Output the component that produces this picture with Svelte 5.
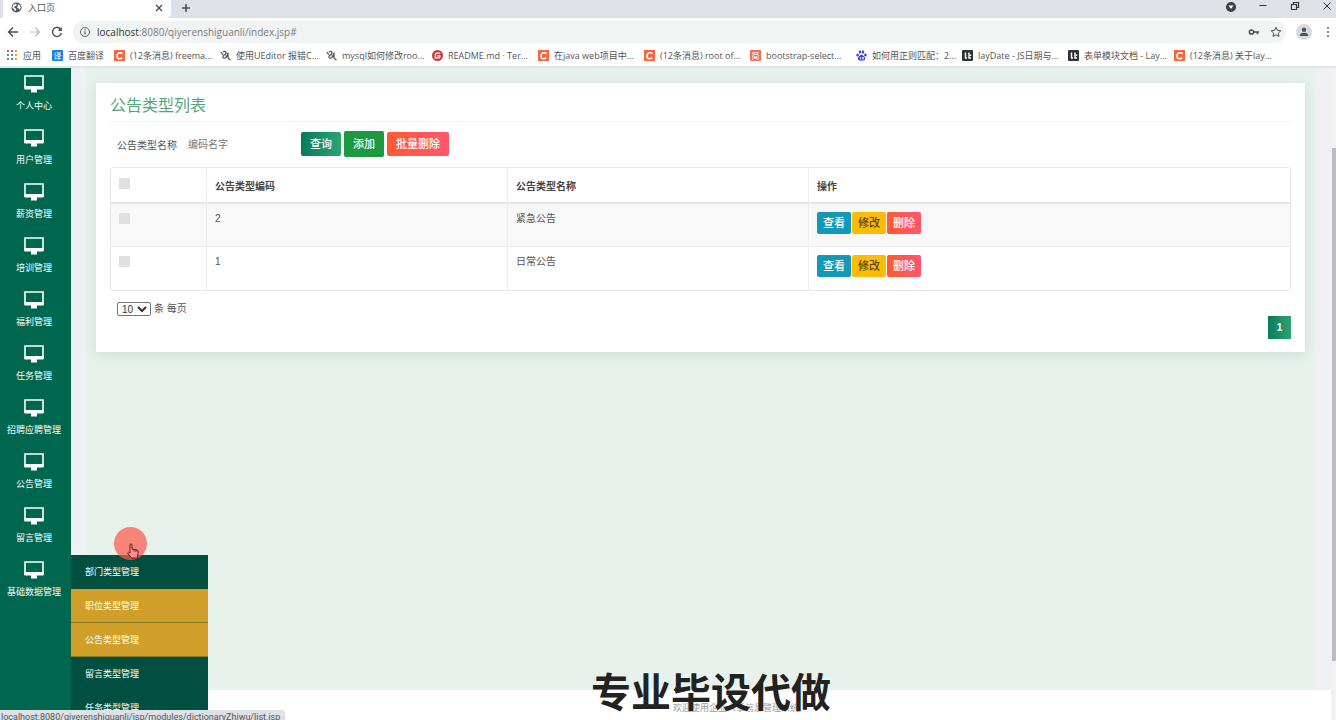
<script lang="ts">
	interface Bookmark {
		icon: 'csdn' | 'ueditor' | 'gitee' | 'jian' | 'baidu' | 'lay';
		title: string;
	}

	const bookmarks: Bookmark[] = [
		{ icon: 'csdn', title: '(12条消息) freema...' },
		{ icon: 'ueditor', title: '使用UEditor 报错C...' },
		{ icon: 'ueditor', title: 'mysql如何修改roo...' },
		{ icon: 'gitee', title: 'README.md · Ter...' },
		{ icon: 'csdn', title: '在java web项目中...' },
		{ icon: 'csdn', title: '(12条消息) root of...' },
		{ icon: 'jian', title: 'bootstrap-select...' },
		{ icon: 'baidu', title: '如何用正则匹配：2...' },
		{ icon: 'lay', title: 'layDate - JS日期与...' },
		{ icon: 'lay', title: '表单模块文档 - Lay...' },
		{ icon: 'csdn', title: '(12条消息) 关于lay...' }
	];

	const menu = [
		'个人中心',
		'用户管理',
		'薪资管理',
		'培训管理',
		'福利管理',
		'任务管理',
		'招聘应聘管理',
		'公告管理',
		'留言管理',
		'基础数据管理'
	];

	const submenu = [
		{ title: '部门类型管理', active: false },
		{ title: '职位类型管理', active: true },
		{ title: '公告类型管理', active: true },
		{ title: '留言类型管理', active: false },
		{ title: '任务类型管理', active: false }
	];

	const rows = [
		{ code: 2, name: '紧急公告' },
		{ code: 1, name: '日常公告' }
	];

	let keyword = $state('');
	let pageSize = $state('10');
</script>

<div class="window">
	<header>
		<div class="tabs">
			<div class="tab">
				<svg class="globe" viewBox="0 0 12 12">
					<circle cx="6" cy="6" r="5.5" fill="#50555a" />
					<path d="M2 3.5l2.5-1.6 2 .8-1 1.6-2 .6.3 1.6 2 .6-.4 2.2-1.2.4L2.6 7 1.4 6zM8 2.5l2 1.6.6 2.2L9 8.6l-.9-1.7-1.5-.7.6-1.7z" fill="#fff" />
				</svg>
				<span>入口页</span>
				<button class="icon-btn close" aria-label="关闭标签页">
					<svg viewBox="0 0 8 8"><path d="M1 1l6 6M7 1L1 7" stroke="#45494d" stroke-width="1.3" /></svg>
				</button>
			</div>
			<button class="icon-btn plus" aria-label="新标签页">
				<svg viewBox="0 0 10 10"><path d="M5 1v8M1 5h8" stroke="#45494d" stroke-width="1.5" /></svg>
			</button>
			<div class="controls">
				<svg viewBox="0 0 12 12"><circle cx="6" cy="7" r="5" fill="#3c4043" /><path d="M3.5 5.5h5L6 9z" fill="#fff" /></svg>
				<svg viewBox="0 0 12 12"><path d="M2.5 5.5h7" stroke="#333" /></svg>
				<svg viewBox="0 0 12 12"><path d="M2.5 4.5h5v5h-5zM4.5 4V2.5h5v5H8" fill="none" stroke="#333" stroke-width="1.2" /></svg>
				<svg viewBox="0 0 12 12"><path d="M2.5 2.5l7 7M9.5 2.5l-7 7" stroke="#333" /></svg>
			</div>
		</div>

		<div class="toolbar">
			<button class="icon-btn" aria-label="后退">
				<svg viewBox="0 0 12 12"><path d="M11 6H1.5M6 1.5L1.5 6 6 10.5" fill="none" stroke="#4a4e52" stroke-width="1.4" /></svg>
			</button>
			<button class="icon-btn" aria-label="前进">
				<svg viewBox="0 0 12 12"><path d="M1 6h9.5M6 1.5L10.5 6 6 10.5" fill="none" stroke="#b9bcc0" stroke-width="1.2" /></svg>
			</button>
			<button class="icon-btn" aria-label="重新加载">
				<svg viewBox="0 0 12 12"><path d="M10 3.8A4.5 4.5 0 1 0 10.4 7" fill="none" stroke="#4a4e52" stroke-width="1.4" /><path d="M10.8 1v4h-4z" fill="#4a4e52" /></svg>
			</button>
			<div class="address">
				<svg viewBox="0 0 12 12"><circle cx="6" cy="6" r="4.5" fill="none" stroke="#5f6368" /><path d="M6 5.3v3.2M6 3.3v1.2" stroke="#5f6368" stroke-width="1.2" /></svg>
				<span class="url"><b>localhost</b>:8080/qiyerenshiguanli/index.jsp#</span>
				<svg viewBox="0 0 12 12"><circle cx="3.5" cy="6" r="2.1" fill="none" stroke="#4a4e52" stroke-width="1.5" /><path d="M5.5 6H11M9.5 6v2.3" stroke="#4a4e52" stroke-width="1.6" /></svg>
				<svg class="star" viewBox="0 0 12 12"><path d="M6 1.3l1.4 3.1 3.4.4-2.5 2.3.7 3.4-3-1.7-3 1.7.7-3.4L1.2 4.8l3.4-.4z" fill="none" stroke="#4a4e52" /></svg>
			</div>
			<svg class="avatar" viewBox="0 0 16 16"><circle cx="8" cy="8" r="8" fill="#d5dbe1" /><circle cx="8" cy="5.8" r="2.2" fill="#4b5560" /><path d="M3.8 12v-1.2Q4.5 8.8 8 8.8t4.2 2V12z" fill="#4b5560" /></svg>
			<svg class="dots" viewBox="0 0 12 12"><circle cx="6" cy="2" r="1" /><circle cx="6" cy="6" r="1" /><circle cx="6" cy="10" r="1" /></svg>
		</div>

		<nav class="bookmarks" aria-label="书签">
			<a class="apps" href="#apps">
				<svg viewBox="0 0 11 11">
					{#each ['#e0524a', '#e0524a', '#e8a13a', '#4c9a5b', '#4a7fd0', '#e8a13a', '#4c9a5b', '#4c9a5b', '#e8a13a'] as color, i}
						<rect x={(i % 3) * 4} y={Math.floor(i / 3) * 4} width="2" height="2" fill={color} />
					{/each}
				</svg>
				应用
			</a>
			<a class="fanyi" href="#fanyi"><span class="mark blue">译</span>百度翻译</a>
			{#each bookmarks as item}
				<a class="bookmark" href="#bookmark">
					{#if item.icon === 'csdn'}
						<svg viewBox="0 0 11 11"><rect width="11" height="11" fill="#f5673f" /><path d="M8.5 3.4Q5 1.800 3.5 4.2T4 8.4q2 .8 4.2-.5" fill="none" stroke="#fff" stroke-width="1.6" /></svg>
					{:else if item.icon === 'ueditor'}
						<svg viewBox="0 0 11 11"><path d="M.8 2.200l2 2.500M2.800 2q3.200-1.500 3.200.800T3.500 5.200M3.500 5.200Q2 8 4.500 8.200T8 2.500V7q.3 2.500 2.500 2.800M5.500 6.200H8" fill="none" stroke="#55585c" stroke-width="1.300" /></svg>
					{:else if item.icon === 'gitee'}
						<svg viewBox="0 0 11 11"><circle cx="5.5" cy="5.5" r="5.5" fill="#c7383c" /><path d="M8.3 3.2H5.2q-2 0-2 2v2.7h3.2Q8 7.900 8 6.300v-.5H5" fill="none" stroke="#fff" stroke-width="1.2" /></svg>
					{:else if item.icon === 'jian'}
						<span class="mark red">简</span>
					{:else if item.icon === 'baidu'}
						<svg viewBox="0 0 11 11" fill="#3b45dc"><ellipse cx="1.6" cy="5" rx="1.3" ry="1.6" /><ellipse cx="4" cy="2" rx="1.2" ry="1.7" /><ellipse cx="7" cy="2" rx="1.2" ry="1.7" /><ellipse cx="9.4" cy="5" rx="1.3" ry="1.6" /><path d="M5.5 4.5Q7 5 9 7.6 9.8 10.6 7 10.5H4Q1.2 10.6 2 7.6 4 5 5.5 4.5z" /><path d="M4.2 7v2h1M6.3 7v2h1.2V7" fill="none" stroke="#fff" stroke-width=".7" /></svg>
					{:else}
						<svg viewBox="0 0 11 11"><rect width="11" height="11" rx="1" fill="#2f3338" /><path d="M3.500 2.500V8H5M7 2.500V8h2M8.500 4.500v1.500" fill="none" stroke="#fff" stroke-width="1.4" /></svg>
					{/if}
					{item.title}
				</a>
			{/each}
		</nav>
	</header>

	<div class="body">
		<aside>
			{#each menu as title, i}
				<div class="menu-item">
					<a href="#menu">
						<svg viewBox="0 0 20 18"><path d="M1 1h18v12H1z" fill="none" stroke="#fff" stroke-width="1.6" /><path d="M.5 11h19v3.500H.5zM7 14h6v3.500H7z" fill="#fff" /></svg>
						{title}
					</a>
					{#if i === menu.length - 1}
						<div class="submenu">
							{#each submenu as sub}
								<a href="#submenu" class:active={sub.active}>{sub.title}</a>
							{/each}
						</div>
					{/if}
				</div>
			{/each}
		</aside>

		<div class="main">
			<main>
				<section class="card">
					<h1>公告类型列表</h1>
					<form class="search" onsubmit={(e) => e.preventDefault()}>
						<label for="keyword">公告类型名称</label>
						<input id="keyword" type="text" placeholder="编码名字" bind:value={keyword} />
						<button class="btn query" type="submit">查询</button>
						<button class="btn add" type="button">添加</button>
						<button class="btn delete" type="button">批量删除</button>
					</form>

					<table>
						<thead>
							<tr>
								<th class="check"><input type="checkbox" aria-label="全选" /></th>
								<th class="field">公告类型编码</th>
								<th class="field">公告类型名称</th>
								<th>操作</th>
							</tr>
						</thead>
						<tbody>
							{#each rows as row}
								<tr>
									<td><input type="checkbox" aria-label={row.name} /></td>
									<td>{row.code}</td>
									<td>{row.name}</td>
									<td>
										<div class="actions">
											<button class="btn view">查看</button>
											<button class="btn edit">修改</button>
											<button class="btn delete">删除</button>
										</div>
									</td>
								</tr>
							{/each}
						</tbody>
					</table>

					<label class="page-size">
						<select bind:value={pageSize}>
							<option>10</option>
							<option>25</option>
							<option>50</option>
						</select>
						条 每页
					</label>
					<div class="pagination"><button>1</button></div>
				</section>
			</main>
			<footer>欢迎使用企业人事信息管理系统</footer>
		</div>

		<div class="scrollbar"><div class="thumb"></div></div>
	</div>

	<div class="pointer">
		<svg viewBox="0 0 14 16"><path d="M4 9V2q0-1.200 1-1.200T6 2v4l5 1q1.500.4 1.300 2L11.500 13v2H5.500L1.500 10q.8-1.500 2.500 0zM8 6.500v2M10 7v2" fill="#ff9088" stroke="#6b1f22" /></svg>
	</div>
	<div class="caption">专业毕设代做</div>
	<div class="status">localhost:8080/qiyerenshiguanli/jsp/modules/dictionaryZhiwu/list.jsp</div>
</div>

<style>
	:global(body) {
		margin: 0;
	}

	.window {
		position: relative;
		display: flex;
		flex-direction: column;
		height: 100vh;
		overflow: hidden;
		background: #fff;
		color: #555;
		font-family: 'Open Sans', 'Noto Sans CJK SC', sans-serif;
		font-size: 10px;
	}

	.window * {
		box-sizing: border-box;
	}

	svg {
		display: block;
		flex-shrink: 0;
		width: 12px;
		height: 12px;
	}

	a {
		color: inherit;
		text-decoration: none;
	}

	button,
	input,
	select {
		font: inherit;
	}

	.icon-btn {
		padding: 0;
		border: 0;
		background: none;
	}

	header {
		flex-shrink: 0;
		border-bottom: 2px solid #e4e7e9;
	}

	.tabs {
		display: flex;
		height: 18px;
		padding-left: 3px;
		background: #dee1e6;
	}

	.tab {
		display: flex;
		align-items: center;
		gap: 6px;
		width: 168px;
		padding: 0 8px 3px;
		border-radius: 0 0 5px 0;
		background: #fff;
		font-size: 9px;
		line-height: 14px;
	}

	.globe {
		width: 11px;
		height: 11px;
	}

	.close {
		margin-left: auto;
	}

	.close svg {
		width: 8px;
		height: 8px;
	}

	.plus {
		margin: 0 10px 3px;
	}

	.plus svg {
		width: 10px;
		height: 10px;
	}

	.controls {
		display: flex;
		gap: 20px;
		margin-left: auto;
		padding-right: 3px;
	}

	.toolbar {
		display: flex;
		align-items: center;
		height: 27px;
		padding: 0 2px 0 7px;
		gap: 10px;
	}

	.address {
		display: flex;
		flex: 1;
		align-items: center;
		gap: 6px;
		height: 22px;
		padding: 0 4px 0 6px;
		border-radius: 11px;
		background: #f1f3f4;
		line-height: 16px;
	}

	.star {
		margin-left: 4px;
	}

	.url {
		flex: 1;
		color: #777b80;
	}

	.url b {
		color: #303336;
		font-weight: 400;
	}

	.avatar {
		width: 16px;
		height: 16px;
	}

	.dots {
		fill: #5f6368;
	}

	.bookmarks {
		display: flex;
		height: 21px;
		padding: 0 7px;
		font-size: 9px;
		line-height: 12px;
		white-space: nowrap;
	}

	.bookmarks a {
		display: flex;
		flex-shrink: 0;
		align-items: center;
		gap: 5px;
	}

	.bookmarks svg,
	.mark {
		width: 11px;
		height: 11px;
	}

	.apps {
		width: 45px;
	}

	.fanyi {
		width: 62px;
	}

	.bookmark {
		width: 106px;
	}

	.mark {
		border-radius: 1px;
		color: #fff;
		font-size: 8px;
		line-height: 11px;
		text-align: center;
	}

	.blue {
		background: #1c7fe8;
	}

	.red {
		background: #ea6f5a;
	}

	.body {
		display: flex;
		flex: 1;
		min-height: 0;
		font-family: 'Liberation Sans', 'Noto Sans CJK SC', sans-serif;
	}

	aside {
		flex-shrink: 0;
		width: 71px;
		background: #00674f;
		color: #fff;
		font-size: 9px;
		line-height: 12px;
	}

	.menu-item {
		position: relative;
		height: 54px;
		padding: 7px 3px 0 0;
	}

	.menu-item > a {
		display: flex;
		flex-direction: column;
		align-items: center;
		gap: 7px;
	}

	.menu-item svg {
		width: 20px;
		height: 18px;
	}

	.submenu {
		position: absolute;
		top: 1px;
		left: 100%;
		z-index: 1;
		width: 137px;
		background: #004f40;
	}

	.submenu a {
		display: block;
		padding: 11px 14px 10px;
		border-bottom: 1px solid #004f40;
	}

	.submenu .active {
		border-bottom-color: #8a7a26;
		background: #d09f29;
	}

	.main {
		display: flex;
		flex: 1;
		flex-direction: column;
		min-width: 0;
		background: #eef0f4;
	}

	main {
		flex: 1;
		margin: 0 15px 0 14px;
		padding: 15px 11px;
		background: #e6f2eb;
	}

	.card {
		padding: 14px;
		padding-bottom: 13px;
		background: #fff;
		box-shadow: 0 3px 12px rgba(60, 90, 90, 0.12);
	}

	h1 {
		margin: 0 0 9px;
		padding-bottom: 6px;
		border-bottom: 1px solid #f3f4f4;
		color: #55a57c;
		font-size: 16px;
		font-weight: 400;
		line-height: 18px;
	}

	.search {
		display: flex;
		align-items: center;
		gap: 3px;
		height: 26px;
		margin-bottom: 10px;
		padding-left: 7px;
	}

	.search input {
		width: 118px;
		padding: 0 8px;
		border: 0;
		outline: 0;
		background: transparent;
	}

	.search input::placeholder {
		color: #777;
	}

	.btn {
		padding: 0 9px;
		border: 0;
		border-radius: 2px;
		color: #fff;
		font-size: 11px;
		font-weight: 500;
		line-height: 24px;
	}

	.query {
		background: linear-gradient(90deg, #087b5d, #2ca471);
	}

	.add {
		line-height: 26px;
		background: #1c9941;
	}

	.delete {
		background: linear-gradient(90deg, #ff5a35, #ff566f);
	}

	table {
		width: 100%;
		border: 1px solid #e6e8ea;
		border-collapse: separate;
		border-spacing: 0;
		border-radius: 3px;
		table-layout: fixed;
		line-height: 14px;
	}

	th,
	td {
		padding: 8px;
		border-right: 1px solid #eceeef;
		text-align: left;
		vertical-align: top;
	}

	th:last-child,
	td:last-child {
		border-right: 0;
	}

	th {
		height: 36px;
		padding: 12px 8px 6px;
		border-bottom: 2px solid #e4e6e8;
		color: #444;
		font-weight: 700;
	}

	td {
		height: 43px;
		border-bottom: 1px solid #e8eaec;
	}

	tbody tr:nth-child(odd) {
		background: #f8f8f8;
	}

	tbody tr:last-child td {
		border-bottom: 0;
	}

	.check {
		width: 96px;
		padding-top: 9px;
	}

	.field {
		width: 301px;
	}

	input[type='checkbox'] {
		display: block;
		width: 11px;
		height: 11px;
		margin: 1px 0;
		background: #e0e0e0;
		appearance: none;
	}

	.actions {
		display: flex;
		gap: 1px;
	}

	.actions .btn {
		padding: 0 6px;
		line-height: 22px;
	}

	.view {
		background: #1398b6;
	}

	.actions .edit {
		background: #fcbc05;
		color: #5a430c;
	}

	.page-size {
		display: flex;
		align-items: center;
		gap: 3px;
		margin: 11px 0 0 7px;
		line-height: 14px;
	}

	.page-size select {
		width: 34px;
		height: 14px;
		padding: 0;
		border: 1px solid #777;
		border-radius: 2px;
		background: #fff;
		color: #333;
	}

	.pagination {
		display: flex;
		justify-content: flex-end;
	}

	.pagination button {
		width: 23px;
		height: 23px;
		padding: 0;
		border: 0;
		background: linear-gradient(90deg, #087b5d, #2ca471);
		color: #fff;
		font-weight: 700;
	}

	footer {
		height: 30px;
		padding-left: 70px;
		background: #fff;
		color: #999;
		font-size: 9px;
		line-height: 36px;
		text-align: center;
	}

	.scrollbar {
		flex-shrink: 0;
		width: 5px;
		padding: 80px 0 0 1px;
		background: #f1f1f1;
	}

	.thumb {
		height: 90%;
		max-height: 513px;
		background: #bdbdbf;
	}

	.pointer {
		position: absolute;
		top: 527px;
		left: 114px;
		z-index: 2;
		display: flex;
		width: 33px;
		height: 33px;
		padding: 16px 0 0 12px;
		border-radius: 50%;
		background: rgba(255, 88, 78, 0.72);
	}

	.pointer svg {
		width: 14px;
		height: 16px;
	}

	.caption {
		position: absolute;
		right: 0;
		bottom: 0;
		left: 86px;
		z-index: 2;
		color: #222;
		font-size: 40px;
		font-weight: 700;
		line-height: 56px;
		text-align: center;
		text-shadow: 0 0 2px #fff;
		pointer-events: none;
	}

	.status {
		position: absolute;
		bottom: 0;
		left: 0;
		z-index: 3;
		height: 10px;
		padding: 0 5px 0 1px;
		overflow: hidden;
		border-radius: 0 3px 0 0;
		background: #dee1e6;
		font-family: Roboto, sans-serif;
		font-size: 9px;
		line-height: 14px;
	}
</style>
